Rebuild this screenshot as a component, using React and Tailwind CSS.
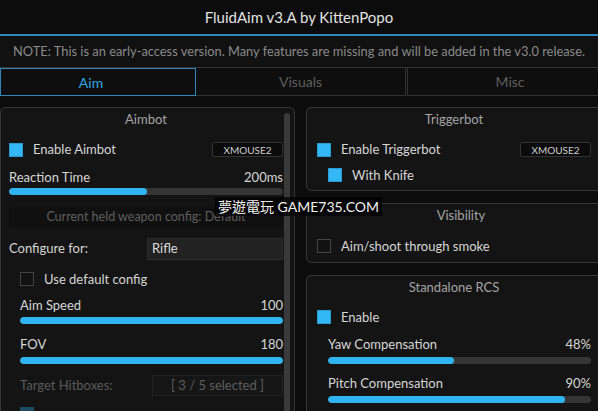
import React from 'react'

const font = { fontFamily: 'Lato, "Noto Sans", "Noto Sans CJK TC", sans-serif' }

function Check({ on }) {
  return (
    <div
      className={`w-[14px] h-[14px] shrink-0 ${
        on ? 'bg-[#33b7f5] border border-[#2b9ad0]' : 'bg-[#121212] border border-[#444]'
      }`}
    />
  )
}

function CheckRow({ on, label, className = '' }) {
  return (
    <div className={`flex items-center h-[14px] ${className}`}>
      <Check on={on} />
      <span className="ml-[10px] text-[13px] text-[#d6d6d6] leading-none">{label}</span>
    </div>
  )
}

function Bind() {
  return (
    <div className="w-[71px] h-[15px] bg-[#0b0b0b] border border-[#333] rounded-[2px] flex items-center justify-center text-[10px] text-[#cfcfcf] leading-none">
      XMOUSE2
    </div>
  )
}

function SliderRow({ label, value, pct, gap = 'mt-[6px]', className = '' }) {
  return (
    <div className={className}>
      <div className="flex items-center justify-between h-[14px] text-[13px] text-[#d6d6d6] leading-none">
        <span>{label}</span>
        <span>{value}</span>
      </div>
      <div className={`${gap} h-[7px] rounded-full bg-[#353535] overflow-hidden`}>
        <div className="h-full rounded-full bg-[#30b4f0]" style={{ width: `${pct}%` }} />
      </div>
    </div>
  )
}

function Panel({ title, children, className = '' }) {
  return (
    <div className={`bg-[#141414] border border-[#363636] rounded-[5px] ${className}`}>
      <div className="h-[24px] flex items-center justify-center text-[13px] text-[#a4a4a4]">{title}</div>
      {children}
    </div>
  )
}

export default function App() {
  return (
    <div className="w-[598px] h-[411px] overflow-hidden bg-[#0c0c0c] relative" style={font}>
      {/* Title */}
      <div className="h-[34px] flex items-center justify-center text-[15px] text-[#e2e2e2]">
        FluidAim v3.A by KittenPopo
      </div>
      <div className="h-[2px] bg-[#2f86bb]" />

      {/* Note */}
      <div className="h-[31px] bg-[#111] flex items-center justify-center text-[12.85px] text-[#8a8a8a] whitespace-nowrap">
        NOTE: This is an early-access version. Many features are missing and will be added in the v3.0 release.
      </div>

      {/* Tabs */}
      <div className="h-[29px] flex border-t border-[#333] bg-[#0e0e0e] text-[14px]">
        <div className="w-[196px] border border-[#2f86bb] flex items-center justify-center pr-[14px] text-[#2ea7e3]">Aim</div>
        <div className="w-[210px] border-b border-r border-[#333] flex items-center justify-center text-[#5e5e5e]">Visuals</div>
        <div className="flex-1 border-b border-l border-[#333] ml-px flex items-center justify-center pl-[14px] text-[#5e5e5e]">Misc</div>
      </div>

      {/* Content */}
      <div className="flex gap-[11px] pt-[11px]">
        {/* Left column */}
        <Panel title="Aimbot" className="w-[295px] h-[320px] shrink-0 relative pl-[8px] pr-[11px]">
          <div className="absolute right-[4px] top-[5px] bottom-[14px] w-[6px] rounded-full bg-[#3a3a3a]" />
          <div className="mt-[10px] flex items-center justify-between">
            <CheckRow on label="Enable Aimbot" />
            <Bind />
          </div>
          <SliderRow label="Reaction Time" value="200ms" pct={50.5} gap="mt-[4px]" className="mt-[13px]" />
          <div className="mt-[12px] h-[21px] bg-[#101010] rounded-[3px] flex items-center justify-center text-[12.5px] text-[#5f5f5f]">
            Current held weapon config: Default
          </div>
          <div className="mt-[10px] flex items-center h-[22px]">
            <span className="w-[138px] text-[13px] text-[#d6d6d6]">Configure for:</span>
            <div className="flex-1 h-full bg-[#222] border border-[#2c2c2c] flex items-center pl-[4px] text-[13px] text-[#dcdcdc]">
              Rifle
            </div>
          </div>
          <div className="pl-[11px]">
            <CheckRow label="Use default config" className="mt-[12px]" />
            <SliderRow label="Aim Speed" value="100" pct={100} gap="mt-[5px]" className="mt-[12px]" />
            <SliderRow label="FOV" value="180" pct={100} className="mt-[13px]" />
            <div className="mt-[11px] flex items-center h-[21px]">
              <span className="w-[132px] text-[13px] text-[#5a5a5a]">Target Hitboxes:</span>
              <div className="flex-1 h-full bg-[#161616] border border-[#222] flex items-center justify-center text-[13px] text-[#5e5e5e]">
                [ 3 / 5 selected ]
              </div>
            </div>
            <div className="mt-[11px] w-[14px] h-[14px] bg-[#1d4a63]" />
          </div>
        </Panel>

        {/* Right column */}
        <div className="flex-1 flex flex-col gap-[12px] min-w-0">
          <Panel title="Triggerbot" className="w-[300px] pl-[10px] pr-[14px] pb-[8px]">
            <div className="mt-[10px] flex items-center justify-between">
              <CheckRow on label="Enable Triggerbot" />
              <Bind />
            </div>
            <CheckRow on label="With Knife" className="mt-[11px] pl-[11px]" />
          </Panel>
          <Panel title="Visibility" className="w-[300px] pl-[10px] pb-[9px]">
            <CheckRow label="Aim/shoot through smoke" className="mt-[11px]" />
          </Panel>
          <Panel title="Standalone RCS" className="w-[300px] h-[150px] pl-[10px] pr-[14px]">
            <CheckRow on label="Enable" className="mt-[10px]" />
            <div className="pl-[11px]">
              <SliderRow label="Yaw Compensation" value="48%" pct={48} className="mt-[13px]" />
              <SliderRow label="Pitch Compensation" value="90%" pct={90} className="mt-[12px]" />
            </div>
          </Panel>
        </div>
      </div>

      {/* Watermark */}
      <div className="absolute left-[215px] top-[197px] h-[19px] px-[3px] bg-black/75 flex items-center text-[14px] text-[#f0f0f0] whitespace-nowrap">
        夢遊電玩 GAME735.COM
      </div>
    </div>
  )
}
